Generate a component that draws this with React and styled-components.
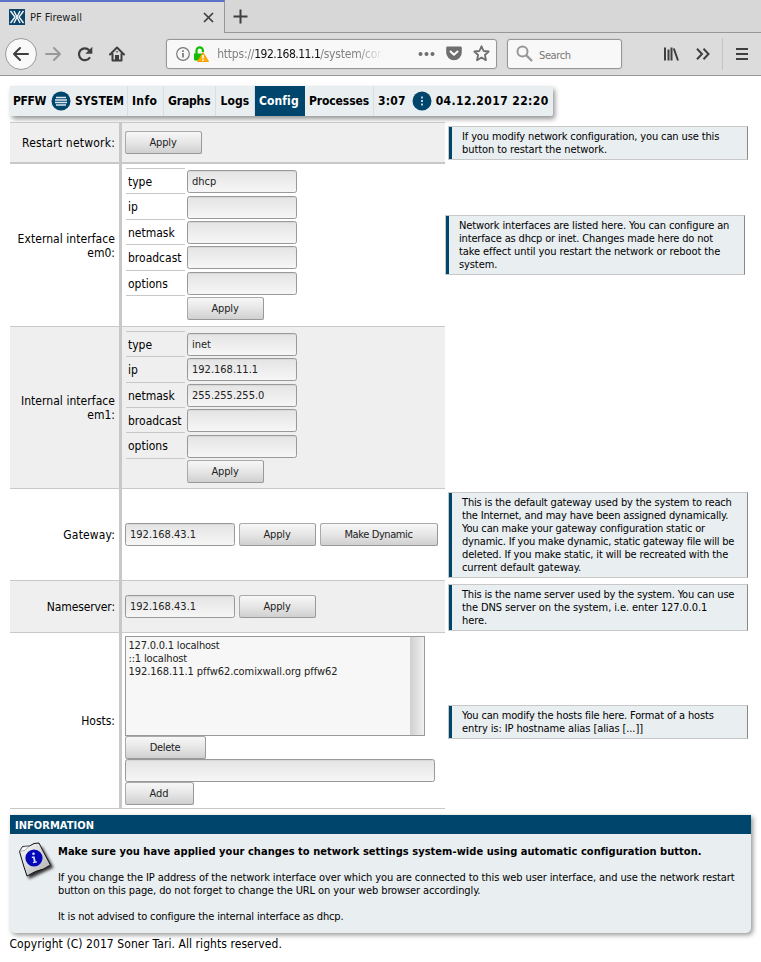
import React from 'react';
import styled, { createGlobalStyle, css } from 'styled-components';

const NAVY = '#00456b';
const PALE = '#e9eef1';
const RULE = '#c8c8c8';

const GlobalStyle = createGlobalStyle`
  * { box-sizing: border-box; }
  body {
    margin: 0;
    background: #fff;
    color: #000;
    font-family: "DejaVu Sans Condensed", "DejaVu Sans", sans-serif;
    font-size: 11px;
    line-height: 13px;
  }
`;

const Text = styled.span`
  display: block;
  white-space: nowrap;
  letter-spacing: ${(p) => p.$ls ?? 0}px;
`;

/* ---------- browser chrome ---------- */

const Window = styled.div`
  width: 761px;
  height: 962px;
  overflow: hidden;
`;

const TabStrip = styled.div`
  display: flex;
  height: 33px;
  background: #d7d7d7;
`;

const Tab = styled.div`
  display: flex;
  align-items: center;
  width: 225px;
  height: 33px;
  padding: 0 10px 1px 9px;
  background: #dcdcdc;
  border-top: 2px solid #5a73c8;
  border-right: 1px solid #989898;
  color: #222;
`;

const TabTitle = styled(Text)`
  flex: 1;
  padding-left: 5px;
`;

const TabRest = styled.div`
  display: flex;
  flex: 1;
  align-items: center;
  padding-left: 8px;
  border-bottom: 1px solid #989898;
`;

const Toolbar = styled.div`
  display: flex;
  align-items: center;
  height: 43px;
  padding: 0 0 1px 5px;
  background: #dcdcdc;
  border-bottom: 1px solid #989898;
`;

const BackButton = styled.div`
  display: flex;
  align-items: center;
  justify-content: center;
  width: 32px;
  height: 32px;
  border: 1px solid #999;
  border-radius: 50%;
  background: #f9f9f9;
`;

const ToolIcon = styled.div`
  display: flex;
  align-items: center;
  justify-content: center;
  width: 32px;
  height: 32px;
`;

const FieldBox = styled.div`
  display: flex;
  align-items: center;
  height: 30px;
  width: ${(p) => p.$w}px;
  margin-left: ${(p) => p.$gap}px;
  padding: 0 6px 0 ${(p) => p.$pad}px;
  border: 1px solid #969696;
  border-radius: 3px;
  background: #f8f8f8;
  box-shadow: 0 0 2px rgba(0, 0, 0, 0.12);
  color: #777;
`;

const Url = styled.div`
  display: flex;
  width: 184px;
  padding-top: 1px;
  margin-left: 8px;
  font-size: 12px;
  line-height: 16px;
  mask-image: linear-gradient(to right, #000 140px, transparent 166px);
  color: #808080;
`;

const Host = styled(Text)`
  color: #111;
`;

const FieldIcons = styled.div`
  display: flex;
  align-items: center;
  gap: 11px;
  margin-left: auto;
`;

const SearchLabel = styled(Text)`
  margin-left: 6px;
  padding-top: 3px;
  color: #777;
`;

const RightTools = styled.div`
  display: flex;
  align-items: center;
  margin-left: 33px;
`;

const Divider = styled.div`
  width: 1px;
  height: 32px;
  margin: 0 3px 0 3px;
  background: #c4c4c4;
`;

/* ---------- page ---------- */

const Page = styled.div`
  padding: 10px 10px 0;
`;

const Menu = styled.div`
  display: flex;
  width: 543px;
  height: 30px;
  background: ${PALE};
  box-shadow: 2px 3px 5px rgba(0, 0, 0, 0.42);
  border-radius: 0 2px 2px 2px;
  font-size: 12px;
  font-weight: bold;
  line-height: 15px;
`;

const MenuCell = styled.div`
  display: flex;
  align-items: center;
  width: ${(p) => p.$w}px;
  padding-left: ${(p) => p.$start ?? 4}px;
  ${(p) =>
    p.$active
      ? css`
          background: ${NAVY};
          color: #fff;
        `
      : css`
          border-right: 1px solid ${p.$last ? 'transparent' : '#d9dee2'};
        `}
`;

const MenuIcon = styled.svg`
  flex: none;
  width: 20px;
  height: 20px;
  margin: 0 ${(p) => p.$mr}px 0 ${(p) => p.$ml}px;
`;

const Settings = styled.div`
  margin-top: 6px;
`;

const SettingRow = styled.div`
  display: grid;
  grid-template-columns: 435px 1fr;
  align-items: center;
`;

const SettingMain = styled.div`
  display: grid;
  grid-template-columns: 112px 323px;
  height: ${(p) => p.$h}px;
  border-top: ${(p) => (p.$first ? 1 : 0)}px solid ${RULE};
  border-bottom: ${(p) => p.$rule ?? 1}px solid ${RULE};
  background: ${(p) => (p.$shade ? '#efefef' : '#fff')};
`;

const SettingLabel = styled.div`
  display: flex;
  flex-direction: column;
  justify-content: center;
  align-items: flex-end;
  padding: 1px 4px 0 0;
  border-right: 3px solid ${RULE};
  font-size: 12px;
  line-height: 14px;
`;

const SettingBody = styled.div`
  display: flex;
  align-items: center;
  gap: 4px;
  padding: 0 0 0 3px;
`;

const Hint = styled.div`
  width: 300px;
  margin-left: ${(p) => (p.$flush ? 0 : 3)}px;
  margin-top: ${(p) => (p.$low ? 2 : 0)}px;
  margin-bottom: ${(p) => (p.$flush ? 2 : 0)}px;
  border: 1px solid ${RULE};
  border-right-color: #888;
  background: ${PALE};
`;

const HintInner = styled.div`
  border-left: 3px solid ${NAVY};
  padding: 3px 0 3px 10px;
`;

const Control = css`
  display: flex;
  align-items: center;
  height: 23px;
  flex: none;
  border: 1px solid #999;
  border-radius: 2.5px;
  color: #222;
`;

const Button = styled.div`
  ${Control}
  justify-content: center;
  width: ${(p) => p.$w ?? 77}px;
  padding-right: 1px;
  background: linear-gradient(#f7f7f7, #e6e6e6 50%, #d0d0d0);
  border-color: #aaa #999 #999 #aaa;
`;

const Input = styled.div`
  ${Control}
  width: ${(p) => p.$w ?? 110}px;
  padding-left: 4px;
  background: linear-gradient(#e4e4e4, #f6f6f6);
  box-shadow: inset 0 1px 1px rgba(0, 0, 0, 0.06);
`;

const Iface = styled.div`
  display: grid;
  grid-template-columns: 59px 110px;
  column-gap: 2px;
  grid-auto-rows: 25.4px;
  align-self: start;
  padding: ${(p) => p.$top}px 0 0 1px;
`;

const IfaceLabel = styled.div`
  border-top: 1px solid ${RULE};
  padding: 5px 0 0 2px;
  font-size: 12px;
  line-height: 16px;
`;

const IfaceCell = styled.div`
  padding-top: 2.2px;
`;

const HostsStack = styled.div`
  display: flex;
  flex-direction: column;
  align-self: start;
  padding-top: 3px;
`;

const ListBox = styled.div`
  display: flex;
  width: 300px;
  height: 100px;
  border: 1px solid #999;
  background: #f7f7f7;
  color: #222;
`;

const ListItems = styled.div`
  flex: 1;
  padding: 2px 0 0 2.5px;
`;

const ScrollTrack = styled.div`
  width: 14px;
  background: linear-gradient(to right, #cfcfcf, #f0f0f0);
`;

const InfoPanel = styled.div`
  width: 741px;
  height: 118px;
  margin-top: 6px;
  background: ${PALE};
  border-radius: 0 0 5px 5px;
  box-shadow: 2px 2px 5px rgba(0, 0, 0, 0.42);
`;

const InfoTitle = styled.div`
  height: 19px;
  padding: 4px 0 0 5px;
  background: ${NAVY};
  color: #fff;
  font-weight: bold;
`;

const InfoBody = styled.div`
  display: flex;
`;

const InfoPicture = styled.svg`
  flex: none;
  width: 40px;
  height: 42px;
  margin: 6px 2px 0 6px;
`;

const Paragraph = styled.div`
  margin-bottom: 13px;
  font-weight: ${(p) => (p.$bold ? 'bold' : 'normal')};
`;

const InfoText = styled.div`
  padding-top: 11px;
`;

const Footer = styled.div`
  margin: 4px 0 0 -0.5px;
  font-size: 12px;
  line-height: 15px;
`;

/* ---------- drawings ---------- */

const Favicon = () => (
  <svg width="16" height="16" viewBox="0 0 16 16">
    <rect width="16" height="16" rx="0.5" fill="#0b436b" />
    <g fill="none" stroke="#f2f7fa" strokeWidth="1.4">
      <path d="M1.5 2L6 8l-4.500 6M14.500 2L10 8l4.500 6M5 2l6 12M11 2L5 14" />
    </g>
  </svg>
);

const CloseIcon = () => (
  <svg width="11" height="11" viewBox="0 0 11 11" stroke="#3f3f3f" strokeWidth="1.7">
    <path d="M1 1l9 9M10 1l-9 9" />
  </svg>
);

const PlusIcon = () => (
  <svg width="15" height="15" viewBox="0 0 15 15" stroke="#3f3f3f" strokeWidth="2">
    <path d="M7.500 0.500v14M0.500 7.500h14" />
  </svg>
);

const Arrow = ({ flip, color }) => (
  <svg width="18" height="16" viewBox="0 0 18 16" fill="none" stroke={color} strokeWidth="2">
    <path strokeLinejoin="round" strokeLinecap="round" d={flip ? 'M2 8h14M10 2l6 6-6 6' : 'M16 8H2M8 2L2 8l6 6'} />
  </svg>
);

const ReloadIcon = () => (
  <svg width="16" height="16" viewBox="0 0 16 16" fill="none" stroke="#3f3f3f" strokeWidth="2.200">
    <path d="M13 11.200A5.900 5.900 0 1 1 12.200 4.200" />
    <path d="M15.300 0.800v7H8.300z" fill="#3f3f3f" stroke="none" />
  </svg>
);

const HomeIcon = () => (
  <svg width="16" height="16" viewBox="0 0 16 16" fill="none" stroke="#3f3f3f">
    <path strokeWidth="2" strokeLinejoin="round" strokeLinecap="round" d="M1 8.500L8 1.500l7 7M3.500 8v6.500h9V8" />
    <path fill="#3f3f3f" stroke="none" d="M6 9h4v5.500H6zM7.400 5h1.300v1.500H7.400z" />
  </svg>
);

const IdentityIcon = () => (
  <svg width="14" height="14" viewBox="0 0 14 14" fill="none" stroke="#777">
    <circle cx="7" cy="7" r="6.300" strokeWidth="1.200" />
    <path strokeWidth="1.700" d="M7 6v4.500M7 3.200v1.700" />
  </svg>
);

const LockIcon = () => (
  <svg width="16" height="16" viewBox="0 0 16 16">
    <path d="M3.500 8V4.500a3.200 3.200 0 0 1 6.400 0V6" fill="none" stroke="#12bc00" strokeWidth="2.200" />
    <path d="M1 7.500h9v7H2a1 1 0 0 1-1-1z" fill="#12bc00" />
    <path d="M10 6.500l5.500 9h-11z" fill="#ffa90a" stroke="#f3a000" strokeLinejoin="round" />
    <path d="M10 9v3.500M10 13.500V15" stroke="#fff" strokeWidth="1.600" />
  </svg>
);

const DotsIcon = () => (
  <svg width="17" height="6" viewBox="0 0 17 6" fill="#6e6e6e">
    <circle cx="2.500" cy="3" r="2" />
    <circle cx="8.500" cy="3" r="2" />
    <circle cx="14.500" cy="3" r="2" />
  </svg>
);

const PocketIcon = () => (
  <svg width="16" height="15" viewBox="0 0 16 15">
    <path fill="#6e6e6e" d="M1.500 0.500h13a1.300 1.300 0 0 1 1.300 1.300V6.500a7.800 7.800 0 0 1-15.600 0V1.800A1.300 1.300 0 0 1 1.500 0.500z" />
    <path fill="none" stroke="#fff" strokeWidth="2" strokeLinecap="round" strokeLinejoin="round" d="M4.500 5.500L8 8.800l3.500-3.300" />
  </svg>
);

const StarIcon = () => (
  <svg width="17" height="17" viewBox="0 0 17 17">
    <path
      fill="none"
      stroke="#6e6e6e"
      strokeWidth="1.800"
      strokeLinejoin="round"
      d="M8.500 1.300l2.100 4.700 5.100.5-3.800 3.500 1.100 5.200-4.500-2.700L4 15.200 5.100 10 1.300 6.500l5.100-.5z"
    />
  </svg>
);

const SearchIcon = () => (
  <svg width="17" height="17" viewBox="0 0 17 17" fill="none" stroke="#979797" strokeWidth="2">
    <circle cx="6.500" cy="6.500" r="5" />
    <path d="M10 10l6 6" strokeWidth="2.400" />
  </svg>
);

const LibraryIcon = () => (
  <svg width="16" height="16" viewBox="0 0 16 16" stroke="#3f3f3f" strokeWidth="2">
    <path d="M2 1.500v13M5.500 3.500v11M8.500 1.500v13M10.800 2.500l4.200 12" />
  </svg>
);

const ChevronsIcon = () => (
  <svg width="14" height="12" viewBox="0 0 14 12" fill="none" stroke="#3f3f3f" strokeWidth="2">
    <path d="M1 .8L6 6l-5 5.200M7.500.8L12.500 6l-5 5.200" />
  </svg>
);

const HamburgerIcon = () => (
  <svg width="12" height="12" viewBox="0 0 12 12" stroke="#3f3f3f" strokeWidth="2">
    <path d="M0 1h12M0 6h12M0 11h12" />
  </svg>
);

const PageNote = () => (
  <InfoPicture viewBox="0 0 40 42">
    <defs>
      <linearGradient id="paper" x1="0" y1="0" x2="1" y2="1">
        <stop offset="0" stopColor="#fff" />
        <stop offset="0.500" stopColor="#d6d6d6" />
        <stop offset="1" stopColor="#a9a9a9" />
      </linearGradient>
      <filter id="soft" x="-30%" y="-30%" width="160%" height="160%">
        <feGaussianBlur stdDeviation="1.500" />
      </filter>
    </defs>
    <path d="M7 11L26 7l11.500 20.500L13 39z" fill="#000" opacity="0.800" filter="url(#soft)" />
    <path d="M3.500 11.500L6.500 6.500l7-.5 4.500-2.500 5-.5 4 8 7.500 14-7 4-8 2.500-8.500 4.500-3-9z" fill="url(#paper)" stroke="#111" strokeWidth="1" strokeLinejoin="round" />
    <path d="M3.800 11.500L6.700 7l6.300-.7-4 4z" fill="#fff" stroke="#777" strokeWidth="0.600" />
    <circle cx="18" cy="18" r="8.600" fill="#0508b8" />
    <g fill="#d8dcff">
      <circle cx="17.500" cy="13.800" r="1.300" />
      <path d="M15.800 16.500h2.900l.9 5 1.200-.2.200 1.100-4 .8-.2-1.100 1-.2-.6-4-1.300.1z" />
    </g>
  </InfoPicture>
);

/* ---------- composed parts ---------- */

const HintBox = ({ lines, flush, low }) => (
  <Hint $flush={flush} $low={low}>
    <HintInner>
      {lines.map(([text, ls]) => (
        <Text key={text} $ls={ls}>{text}</Text>
      ))}
    </HintInner>
  </Hint>
);

const Rail = styled.div`
  display: flex;
  margin-bottom: ${(p) => -(p.$rule ?? 1)}px;
  padding-bottom: 0;

  > * {
    flex: 1;
    padding-bottom: ${(p) => p.$rule ?? 1}px;
  }
`;

const Setting = ({ label, hint, flush, low, children, ...frame }) => (
  <SettingRow>
    <SettingMain {...frame}>
      <Rail $rule={frame.$rule}>
        <SettingLabel>
          {label.map(([text, ls]) => (
            <Text key={text} $ls={ls}>{text}</Text>
          ))}
        </SettingLabel>
      </Rail>
      <SettingBody>{children}</SettingBody>
    </SettingMain>
    {hint && <HintBox lines={hint} flush={flush} low={low} />}
  </SettingRow>
);

const ApplyButton = () => (
  <Button><Text $ls={-0.15}>Apply</Text></Button>
);

const FIELDS = ['type', 'ip', 'netmask', 'broadcast', 'options'];

const InterfaceForm = ({ values, top }) => (
  <Iface $top={top}>
    {FIELDS.map((name) => (
      <React.Fragment key={name}>
        <IfaceLabel><Text>{name}</Text></IfaceLabel>
        <IfaceCell><Input><Text>{values[name]}</Text></Input></IfaceCell>
      </React.Fragment>
    ))}
    <IfaceLabel />
    <IfaceCell><ApplyButton /></IfaceCell>
  </Iface>
);

const HINTS = {
  restart: [
    ['If you modify network configuration, you can use this', -0.13],
    ['button to restart the network.', -0.09],
  ],
  iface: [
    ['Network interfaces are listed here. You can configure an', -0.13],
    ['interface as dhcp or inet. Changes made here do not', -0.16],
    ['take effect until you restart the network or reboot the', -0.09],
    ['system.', -0.1],
  ],
  gateway: [
    ['This is the default gateway used by the system to reach', -0.16],
    ['the Internet, and may have been assigned dynamically.', -0.17],
    ['You can make your gateway configuration static or', -0.17],
    ['dynamic. If you make dynamic, static gateway file will be', -0.21],
    ['deleted. If you make static, it will be recreated with the', -0.14],
    ['current default gateway.', -0.07],
  ],
  dns: [
    ['This is the name server used by the system. You can use', -0.17],
    ['the DNS server on the system, i.e. enter 127.0.0.1', -0.1],
    ['here.', -0.1],
  ],
  hosts: [
    ['You can modify the hosts file here. Format of a hosts', -0.16],
    ['entry is: IP hostname alias [alias [...]]', -0.1],
  ],
};

const Browser = () => (
  <>
    <TabStrip>
      <Tab>
        <Favicon />
        <TabTitle>PF Firewall</TabTitle>
        <CloseIcon />
      </Tab>
      <TabRest><PlusIcon /></TabRest>
    </TabStrip>
    <Toolbar>
      <BackButton><Arrow color="#3f3f3f" /></BackButton>
      <ToolIcon><Arrow flip color="#999" /></ToolIcon>
      <ToolIcon><ReloadIcon /></ToolIcon>
      <ToolIcon><HomeIcon /></ToolIcon>
      <FieldBox $w={331} $gap={33} $pad={9}>
        <IdentityIcon />
        <Text>&nbsp;</Text>
        <LockIcon />
        <Url>
          <Text $ls={-0.2}>https://</Text>
          <Host $ls={-0.51}>192.168.11.1</Host>
          <Text $ls={-0.2}>/system/conf</Text>
        </Url>
        <FieldIcons>
          <DotsIcon />
          <PocketIcon />
          <StarIcon />
        </FieldIcons>
      </FieldBox>
      <FieldBox $w={115} $gap={10} $pad={8}>
        <SearchIcon />
        <SearchLabel $ls={-0.4}>Search</SearchLabel>
      </FieldBox>
      <RightTools>
        <ToolIcon><LibraryIcon /></ToolIcon>
        <ToolIcon><ChevronsIcon /></ToolIcon>
        <Divider />
        <ToolIcon><HamburgerIcon /></ToolIcon>
      </RightTools>
    </Toolbar>
  </>
);

export default function App() {
  return (
    <Window>
      <GlobalStyle />
      <Browser />
      <Page>
        <Menu>
          <MenuCell $w={118} $start={3}>
            <Text $ls={-0.39}>PFFW</Text>
            <MenuIcon $ml={5} $mr={4} viewBox="0 0 20 20">
              <circle cx="10" cy="10" r="9.500" fill={NAVY} />
              <path d="M5 6.500h10M4 9h12M4 11.500h12M5 14h10" stroke="#dce8ef" strokeWidth="1.300" />
            </MenuIcon>
            <Text>SYSTEM</Text>
          </MenuCell>
          <MenuCell $w={36}><Text $ls={0.35}>Info</Text></MenuCell>
          <MenuCell $w={52}><Text $ls={-0.15}>Graphs</Text></MenuCell>
          <MenuCell $w={39} $start={4.5}><Text $ls={0.1}>Logs</Text></MenuCell>
          <MenuCell $w={50} $active><Text $ls={0.1}>Config</Text></MenuCell>
          <MenuCell $w={69}><Text $ls={-0.11}>Processes</Text></MenuCell>
          <MenuCell $w={179} $last>
            <Text $ls={0.2}>3:07</Text>
            <MenuIcon $ml={6} $mr={4} viewBox="0 0 20 20">
              <circle cx="10" cy="10" r="9.500" fill={NAVY} />
              <path d="M10 5.500v2M10 9v2M10 12.500v2" stroke="#cfe0ea" strokeWidth="1.800" />
            </MenuIcon>
            <Text $ls={0.41}>04.12.2017 22:20</Text>
          </MenuCell>
        </Menu>

        <Settings>
          <Setting label={[['Restart network:', 0.21]]} hint={HINTS.restart} $h={42} $rule={2} $first $shade>
            <ApplyButton />
          </Setting>
          <Setting label={[['External interface', 0.06], ['em0:', 0]]} hint={HINTS.iface} flush $h={163}>
            <InterfaceForm top={4} values={{ type: 'dhcp' }} />
          </Setting>
          <Setting label={[['Internal interface', 0.05], ['em1:', 0]]} $h={162} $shade>
            <InterfaceForm
              top={3.8}
              values={{ type: 'inet', ip: '192.168.11.1', netmask: '255.255.255.0' }}
            />
          </Setting>
          <Setting label={[['Gateway:', 0.15]]} hint={HINTS.gateway} $h={92}>
            <Input><Text>192.168.43.1</Text></Input>
            <ApplyButton />
            <Button $w={118}><Text $ls={-0.4}>Make Dynamic</Text></Button>
          </Setting>
          <Setting label={[['Nameserver:', -0.11]]} hint={HINTS.dns} $h={52} $shade>
            <Input><Text>192.168.43.1</Text></Input>
            <ApplyButton />
          </Setting>
          <Setting label={[['Hosts:', 0]]} hint={HINTS.hosts} low $h={176}>
            <HostsStack>
              <ListBox>
                <ListItems>
                  <Text $ls={-0.2}>127.0.0.1 localhost</Text>
                  <Text $ls={-0.15}>::1 localhost</Text>
                  <Text $ls={-0.07}>192.168.11.1 pffw62.comixwall.org pffw62</Text>
                </ListItems>
                <ScrollTrack />
              </ListBox>
              <Button $w={81}><Text $ls={-0.3}>Delete</Text></Button>
              <Input $w={310} />
              <Button $w={69}><Text>Add</Text></Button>
            </HostsStack>
          </Setting>
        </Settings>

        <InfoPanel>
          <InfoTitle><Text $ls={0.04}>INFORMATION</Text></InfoTitle>
          <InfoBody>
            <PageNote />
            <InfoText>
              <Paragraph $bold>
                <Text $ls={0.045}>
                  Make sure you have applied your changes to network settings system-wide using automatic configuration button.
                </Text>
              </Paragraph>
              <Paragraph>
                <Text $ls={-0.1}>
                  If you change the IP address of the network interface over which you are connected to this web user interface, and use the network restart
                </Text>
                <Text $ls={-0.11}>
                  button on this page, do not forget to change the URL on your web browser accordingly.
                </Text>
              </Paragraph>
              <Paragraph>
                <Text $ls={-0.14}>It is not advised to configure the internal interface as dhcp.</Text>
              </Paragraph>
            </InfoText>
          </InfoBody>
        </InfoPanel>
        <Footer><Text $ls={0.07}>Copyright (C) 2017 Soner Tari. All rights reserved.</Text></Footer>
      </Page>
    </Window>
  );
}
